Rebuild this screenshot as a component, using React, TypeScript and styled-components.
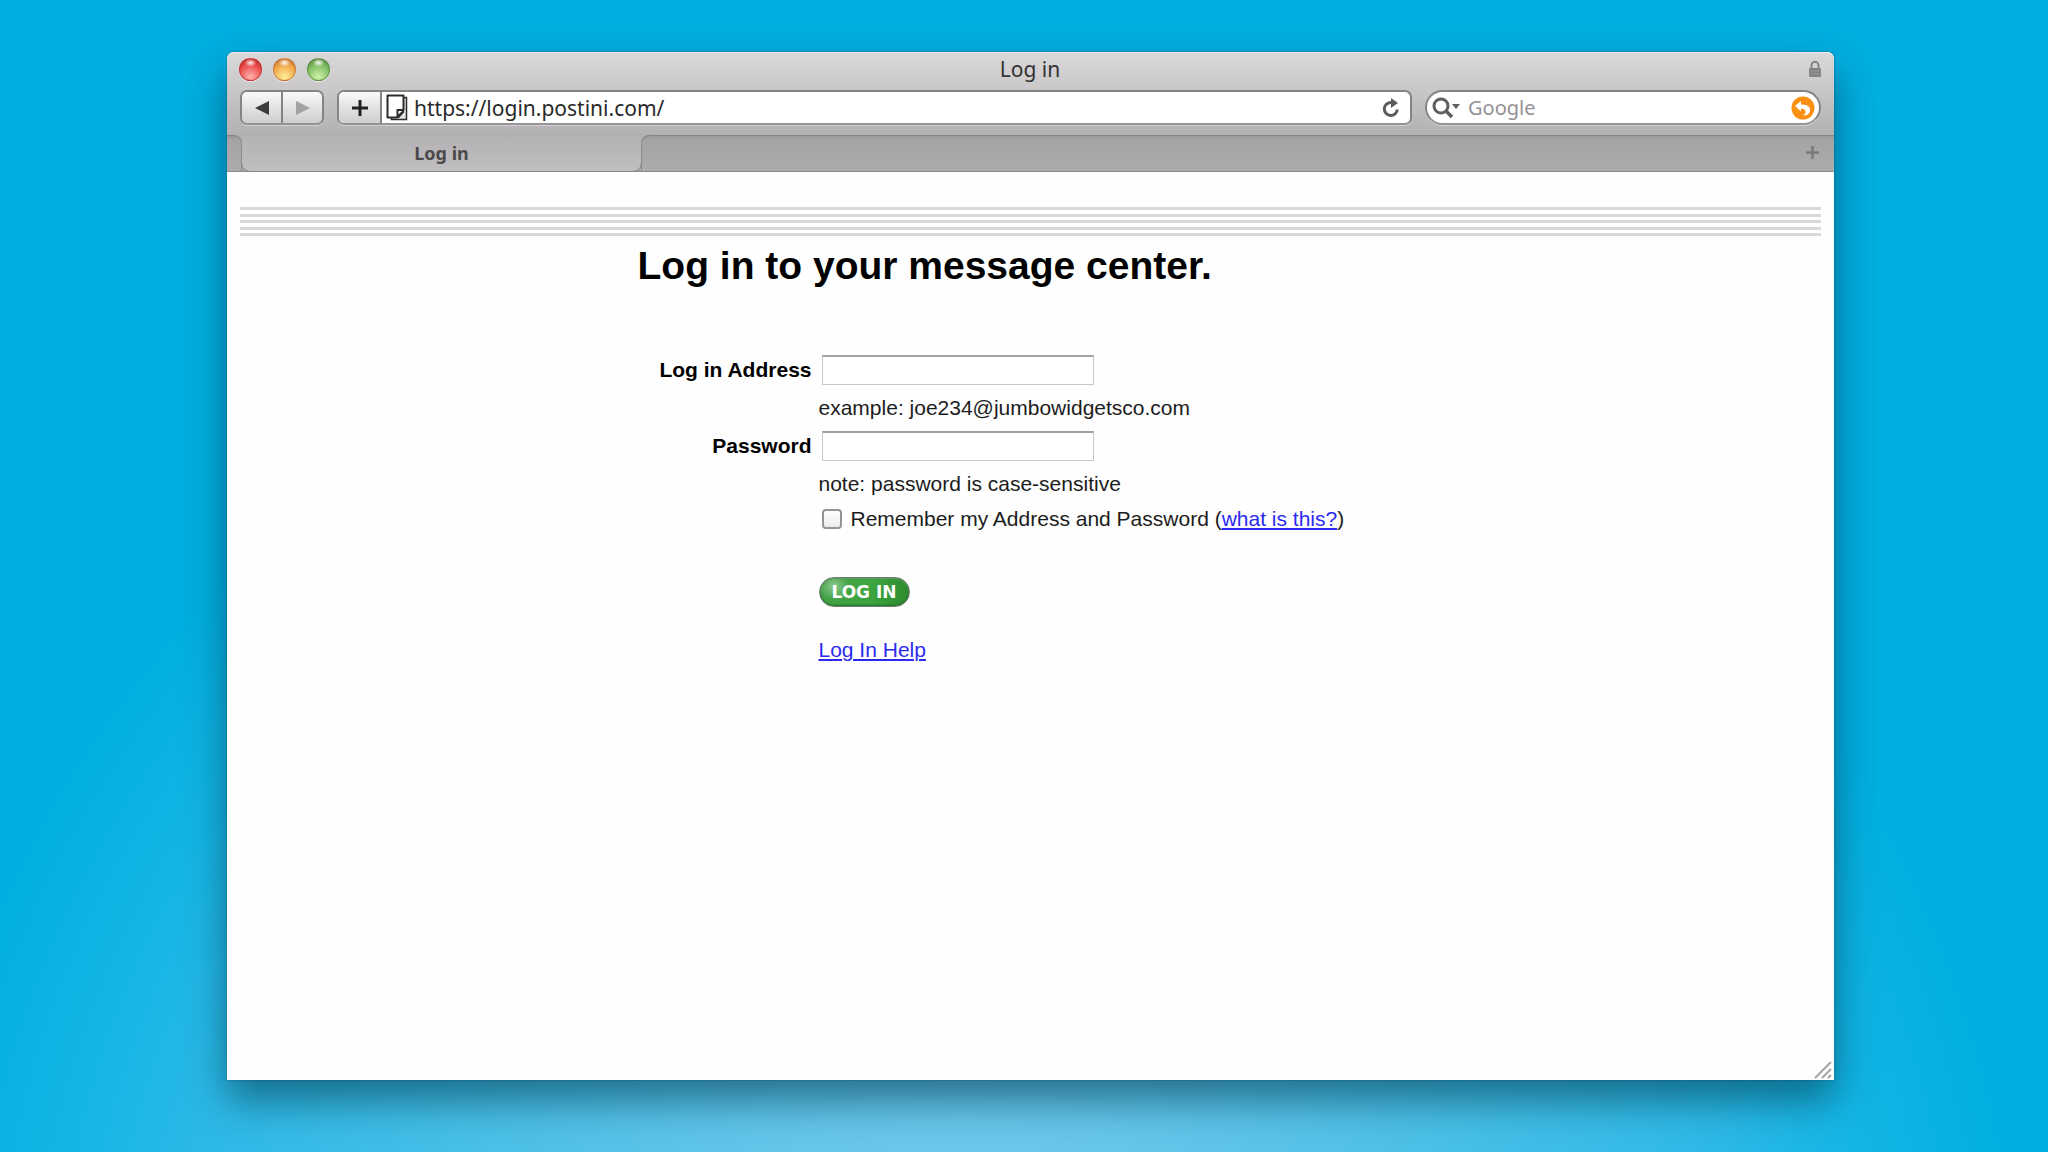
import React from "react";
import styled, { createGlobalStyle, css } from "styled-components";

const uiFont = `"Noto Sans", "Open Sans", sans-serif`;
const pageFont = `"Liberation Sans", Arial, sans-serif`;

const GlobalStyle = createGlobalStyle`
  *, *::before, *::after { box-sizing: border-box; }
  body { margin: 0; background: #00afe1; }
  button, input { font: inherit; }
`;

const Desktop = styled.main`
  display: flex;
  min-height: 100vh;
  padding: 52px 214px 72px 227px;
  background:
    radial-gradient(circle 1060px at 47% 116%, #78ccee 0%, #6ac7eb 20%, #46bfe8 52%, #2cb9e7 74%, #12b5e5 87%, rgba(0, 175, 225, 0) 100%),
    #00afe1;
`;

const Window = styled.section`
  flex: 1;
  min-width: 0;
  display: flex;
  flex-direction: column;
  border-radius: 7px 7px 0 0;
  background: #fefefe;
  box-shadow:
    0 0 2px rgba(0, 60, 85, 0.6),
    0 20px 40px rgba(0, 60, 80, 0.62);
`;

const Chrome = styled.header`
  height: 83px;
  border-radius: 7px 7px 0 0;
  background: linear-gradient(#dad8d9, #c9c7c8 45%, #b2b0b2);
  box-shadow: inset 0 1px 0 #ebe9ea;
`;

const TitleBar = styled.div`
  display: grid;
  grid-template-columns: 1fr auto 1fr;
  align-items: center;
  height: 38px;
  padding: 0 13px 4px 12px;
`;

const WindowTitle = styled.h2`
  margin: 0;
  font: 400 21px/30px ${uiFont};
  color: #333;
`;

const Lights = styled.div`
  display: flex;
  gap: 11px;
`;

const lightColors = {
  red: ["#b52222", "#ea4a4a", "#ffb3ae"],
  amber: ["#b5642a", "#f0a548", "#fff09a"],
  green: ["#4c7d3a", "#7fbb62", "#cdf3a8"],
};

const Light = styled.button<{ $tone: keyof typeof lightColors }>`
  width: 23px;
  height: 23px;
  padding: 0;
  border: 1px solid ${(p) => lightColors[p.$tone][0]}99;
  border-radius: 50%;
  background:
    radial-gradient(ellipse 6px 4px at 50% 18%, rgba(255, 255, 255, 0.95), rgba(255, 255, 255, 0)),
    radial-gradient(circle at 50% 85%, ${(p) => lightColors[p.$tone][2]} 0%, ${(p) => lightColors[p.$tone][1]} 60%, ${(p) => lightColors[p.$tone][0]} 100%);
  box-shadow: 0 1px 0 rgba(255, 255, 255, 0.6);
`;

const LockIcon = styled.svg`
  justify-self: end;
  width: 12px;
  height: 18px;
`;

const Toolbar = styled.div`
  display: flex;
  gap: 13px;
  padding: 0 13px;
`;

const barFrame = css`
  display: flex;
  align-items: stretch;
  height: 35px;
  border: 2px solid #858385;
  border-bottom-color: #969496;
  overflow: hidden;
  box-shadow: 0 1px 0 rgba(255, 255, 255, 0.4);
`;

const ButtonGroup = styled.nav`
  ${barFrame}
  flex: none;
  width: 84px;
  border-radius: 7px;
`;

const ToolButton = styled.button`
  flex: 1;
  display: flex;
  align-items: center;
  justify-content: center;
  padding: 0;
  border: 0;
  background: linear-gradient(#fafafa, #e2e1e2 55%, #cfcdcf);

  & + & {
    border-left: 2px solid #858385;
  }
`;

const AddressBar = styled.div`
  ${barFrame}
  flex: 1;
  min-width: 0;
  border-radius: 7px;
  background: #fff;
`;

const AddButton = styled(ToolButton)`
  flex: 0 0 43px;
  border-right: 2px solid #858385;
`;

const PageIcon = styled.svg`
  flex: none;
  align-self: center;
  width: 22px;
  height: 27px;
  margin: 0 6px 0 4px;
`;

const BarInput = styled.input<{ $size: number }>`
  flex: 1;
  min-width: 0;
  padding: 0;
  border: 0;
  outline: 0;
  background: transparent;
  font: 400 ${(p) => p.$size}px/30px ${uiFont};
  color: #2a2a2a;

  &::placeholder {
    color: #939193;
    opacity: 1;
  }
`;

const IconButton = styled.button`
  flex: none;
  display: flex;
  align-items: center;
  justify-content: center;
  padding: 0;
  border: 0;
  background: transparent;
`;

const ReloadButton = styled(IconButton)`
  width: 38px;
`;

const SearchBar = styled.div`
  ${barFrame}
  flex: 0 1 396px;
  min-width: 0;
  padding: 0 4px;
  gap: 7px;
  border-radius: 18px;
  background: #fff;
`;

const TabStrip = styled.div`
  display: flex;
  height: 37px;
  background: linear-gradient(#b3b1b3, #c0bec0);
  border-bottom: 1px solid #8b898b;
`;

const stripShade = css`
  background: linear-gradient(#989698, #a5a3a5 10%, #adabad);
  border-top: 1px solid #858385;
`;

const StripStart = styled.div`
  ${stripShade}
  flex: none;
  width: 15px;
  border-right: 1px solid #8b898b;
  border-top-right-radius: 8px;
`;

const Tab = styled.button`
  width: 399px;
  padding: 0;
  border: 0;
  background:
    radial-gradient(circle at 100% 0, transparent 6px, #8b898b 7px, #adabad 8px) left bottom / 7px 7px no-repeat,
    radial-gradient(circle at 0 0, transparent 6px, #8b898b 7px, #adabad 8px) right bottom / 7px 7px no-repeat;
  font: 700 18px/34px ${uiFont};
  color: #4b494b;
  text-align: center;
`;

const StripRest = styled.div`
  ${stripShade}
  flex: 1;
  display: flex;
  align-items: center;
  justify-content: flex-end;
  padding: 0 15px 3px 0;
  border-left: 1px solid #8b898b;
  border-top-left-radius: 8px;
`;

const Page = styled.div`
  flex: 1;
  display: flex;
  flex-direction: column;
  padding: 35px 13px 0;
  font: 400 21px/24px ${pageFont};
  color: #1c1c1c;
`;

const Stripes = styled.div`
  display: flex;
  flex-direction: column;
  justify-content: space-between;
  height: 29px;
`;

const Stripe = styled.span`
  height: 3px;
  background: #d9d7d9;
`;

const Panel = styled.div`
  width: 100%;
  max-width: 786px;
  margin: 0 auto;
`;

const Heading = styled.h1`
  margin: 7px 0 66px;
  font-size: 39px;
  line-height: 46px;
  color: #000;
`;

const Form = styled.form`
  display: grid;
  grid-template-columns: 174px 1fr;
  gap: 11px 7px;
  align-items: center;
`;

const FieldLabel = styled.label`
  grid-column: 1;
  justify-self: end;
  font-weight: 700;
  color: #000;
`;

const TextField = styled.input`
  grid-column: 2;
  width: 272px;
  height: 30px;
  margin: 0 0 0 3px;
  padding: 0 5px;
  border: 1px solid #c9c7c9;
  border-top: 2px solid #a3a1a3;
  background: #fff;
  outline: 0;
`;

const Hint = styled.p`
  grid-column: 2;
  margin: 0;
`;

const RememberRow = styled.div`
  grid-column: 2;
  display: flex;
  align-items: center;
`;

const CheckBox = styled.input`
  appearance: none;
  width: 20px;
  height: 20px;
  margin: 0 9px 0 3px;
  border: 2px solid #959395;
  border-radius: 4px;
  background: linear-gradient(#fff, #ececec);
`;

const Link = styled.a`
  color: #2b2bf0;
  text-decoration: underline;
  text-decoration-thickness: 2px;
  text-underline-offset: 2px;
`;

const SubmitButton = styled.button`
  grid-column: 2;
  justify-self: start;
  width: 91px;
  height: 30px;
  margin: 35px 0 20px;
  padding: 0;
  border: 1px solid #6f7f6f;
  border-radius: 15px;
  background:
    radial-gradient(ellipse 16px 14px at 14px 8px, rgba(255, 255, 255, 0.4), rgba(255, 255, 255, 0)),
    linear-gradient(100deg, #43a047, #3da53f 55%, #2c8a2e);
  box-shadow: inset 0 -1px 2px #246e26, inset 0 1px 2px #5f9f60;
  font: 700 17px/28px "DejaVu Sans", Verdana, sans-serif;
  color: #fff;
`;

const ResizeCorner = styled.svg`
  align-self: flex-end;
  margin: auto -11px 1px 0;
  width: 18px;
  height: 18px;
`;

function Plus({ size, weight, color }: { size: number; weight: number; color: string }) {
  return (
    <svg width={size} height={size} viewBox="0 0 16 16" aria-hidden="true">
      <path d="M8 0V16M0 8H16" stroke={color} strokeWidth={weight} />
    </svg>
  );
}

export default function App() {
  return (
    <>
      <GlobalStyle />
      <Desktop>
        <Window>
          <Chrome>
            <TitleBar>
              <Lights>
                <Light $tone="red" aria-label="Close" />
                <Light $tone="amber" aria-label="Minimize" />
                <Light $tone="green" aria-label="Zoom" />
              </Lights>
              <WindowTitle>Log in</WindowTitle>
              <LockIcon viewBox="0 0 12 18" aria-hidden="true">
                <path d="M2.5 9V5.5a3.5 3.8 0 0 1 7 0V9" fill="none" stroke="#858385" strokeWidth="2" />
                <rect x="0" y="8" width="12" height="9" rx="1" fill="#858385" />
                <path d="M1 11H11M1 14H11" stroke="#979597" />
              </LockIcon>
            </TitleBar>
            <Toolbar>
              <ButtonGroup aria-label="History">
                <ToolButton aria-label="Back">
                  <svg width="14" height="14" viewBox="0 0 14 14"><path d="M0 7 14 0V14Z" fill="#3b3b3b" /></svg>
                </ToolButton>
                <ToolButton aria-label="Forward">
                  <svg width="14" height="14" viewBox="0 0 14 14"><path d="M14 7 0 0V14Z" fill="#a3a1a3" /></svg>
                </ToolButton>
              </ButtonGroup>
              <AddressBar>
                <AddButton aria-label="Add bookmark">
                  <Plus size={16} weight={3} color="#222" />
                </AddButton>
                <PageIcon viewBox="0 0 22 27" aria-hidden="true">
                  <path d="M17 3.500H20.500V25.500H5.500V23" fill="#e4e4e4" stroke="#2c2c2c" strokeWidth="1.500" />
                  <path d="M1.500 1.500H17.500V16L11 23.500H1.500Z" fill="#fff" stroke="#2c2c2c" strokeWidth="2" strokeLinejoin="round" />
                  <path d="M18 15H10.500V24H13L18 18.500Z" fill="#2c2c2c" />
                  <path d="M12.500 17H16L12.500 20.500Z" fill="#fff" />
                </PageIcon>
                <BarInput $size={21} aria-label="Address" defaultValue="https://login.postini.com/" />
                <ReloadButton aria-label="Reload">
                  <svg width="18" height="20" viewBox="0 0 18 20">
                    <path d="M10 4.500H8.500A6.500 6.500 0 1 0 15.300 11.500" fill="none" stroke="#5c5a5c" strokeWidth="3" />
                    <path d="M9 0 16 5 9 10Z" fill="#5c5a5c" />
                  </svg>
                </ReloadButton>
              </AddressBar>
              <SearchBar>
                <IconButton aria-label="Search options">
                  <svg width="30" height="22" viewBox="0 0 30 22">
                    <circle cx="10" cy="9" r="7" fill="none" stroke="#5f5d5f" strokeWidth="3" />
                    <path d="M15 14 21 20" stroke="#5f5d5f" strokeWidth="3.500" />
                    <path d="M21 7H29L25 12Z" fill="#5f5d5f" />
                  </svg>
                </IconButton>
                <BarInput $size={20} aria-label="Search" placeholder="Google" />
                <IconButton aria-label="SnapBack">
                  <svg width="24" height="24" viewBox="0 0 24 24">
                    <circle cx="12" cy="12" r="11.500" fill="#fb8f0f" />
                    <path d="M4 10 10 5V8.500C16 8 20 11 19 15C18 18.500 16 19.500 12 19.500C15.500 18 16 13 10 12.500V15.500Z" fill="#fff" />
                  </svg>
                </IconButton>
              </SearchBar>
            </Toolbar>
          </Chrome>
          <TabStrip>
            <StripStart />
            <Tab>Log in</Tab>
            <StripRest>
              <IconButton aria-label="New tab">
                <Plus size={13} weight={3} color="#7b797b" />
              </IconButton>
            </StripRest>
          </TabStrip>
          <Page>
            <Stripes>
              <Stripe />
              <Stripe />
              <Stripe />
              <Stripe />
              <Stripe />
            </Stripes>
            <Panel>
              <Heading>Log in to your message center.</Heading>
              <Form onSubmit={(e) => e.preventDefault()}>
                <FieldLabel htmlFor="address">Log in Address</FieldLabel>
                <TextField id="address" type="text" aria-describedby="address-hint" />
                <Hint id="address-hint">example: joe234@jumbowidgetsco.com</Hint>
                <FieldLabel htmlFor="password">Password</FieldLabel>
                <TextField id="password" type="password" aria-describedby="password-hint" />
                <Hint id="password-hint">note: password is case-sensitive</Hint>
                <RememberRow>
                  <CheckBox id="remember" type="checkbox" />
                  <span>
                    <label htmlFor="remember">Remember my Address and Password</label> (<Link href="#what">what is this?</Link>)
                  </span>
                </RememberRow>
                <SubmitButton type="submit">LOG IN</SubmitButton>
                <Hint>
                  <Link href="#help">Log In Help</Link>
                </Hint>
              </Form>
            </Panel>
            <ResizeCorner viewBox="0 0 18 18" aria-hidden="true">
              <path d="M1 17 17 1M8 17 17 8M14 17 17 14" stroke="#a5a3a5" strokeWidth="2" />
            </ResizeCorner>
          </Page>
        </Window>
      </Desktop>
    </>
  );
}
